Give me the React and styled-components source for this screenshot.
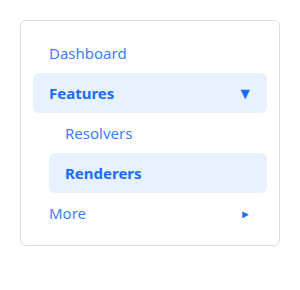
import React from "react"
import styled, { createGlobalStyle } from "styled-components"

const Global = createGlobalStyle`
body {
  margin: 0;
  background: #fff;
  font-family: "Noto Sans", "Open Sans", sans-serif;
}
`

const Page = styled.div`
padding: 20px;
`

const Card = styled.nav`
width: 260px;
box-sizing: border-box;
border: 1px solid #dedede;
border-radius: 6px;
padding: 12px;
display: flex;
flex-direction: column;
`

const Item = styled.div`
height: 40px;
box-sizing: border-box;
display: flex;
align-items: center;
justify-content: space-between;
padding: 0 14px 0 16px;
margin-left: ${props => props.nested ? "16px" : "0"};
border-radius: 6px;
font-size: 15px;
color: ${props => props.active ? "#1a6ef5" : "#3b82f6"};
font-weight: ${props => props.active ? 700 : 400};
background: ${props => props.active ? "#e8f1fe" : "transparent"};
cursor: pointer;
`

const Caret = styled.span`
font-size: ${props => props.open ? "16px" : "11px"};
line-height: 1;
color: #1a6ef5;
margin-right: ${props => props.open ? "0" : "2px"};
`

export default function App() {
    return (
        <Page>
            <Global />
            <Card>
                <Item>Dashboard</Item>
                <Item active>
                    Features
                    <Caret open>▼</Caret>
                </Item>
                <Item nested>Resolvers</Item>
                <Item nested active>Renderers</Item>
                <Item>
                    More
                    <Caret>►</Caret>
                </Item>
            </Card>
        </Page>
    )
}
